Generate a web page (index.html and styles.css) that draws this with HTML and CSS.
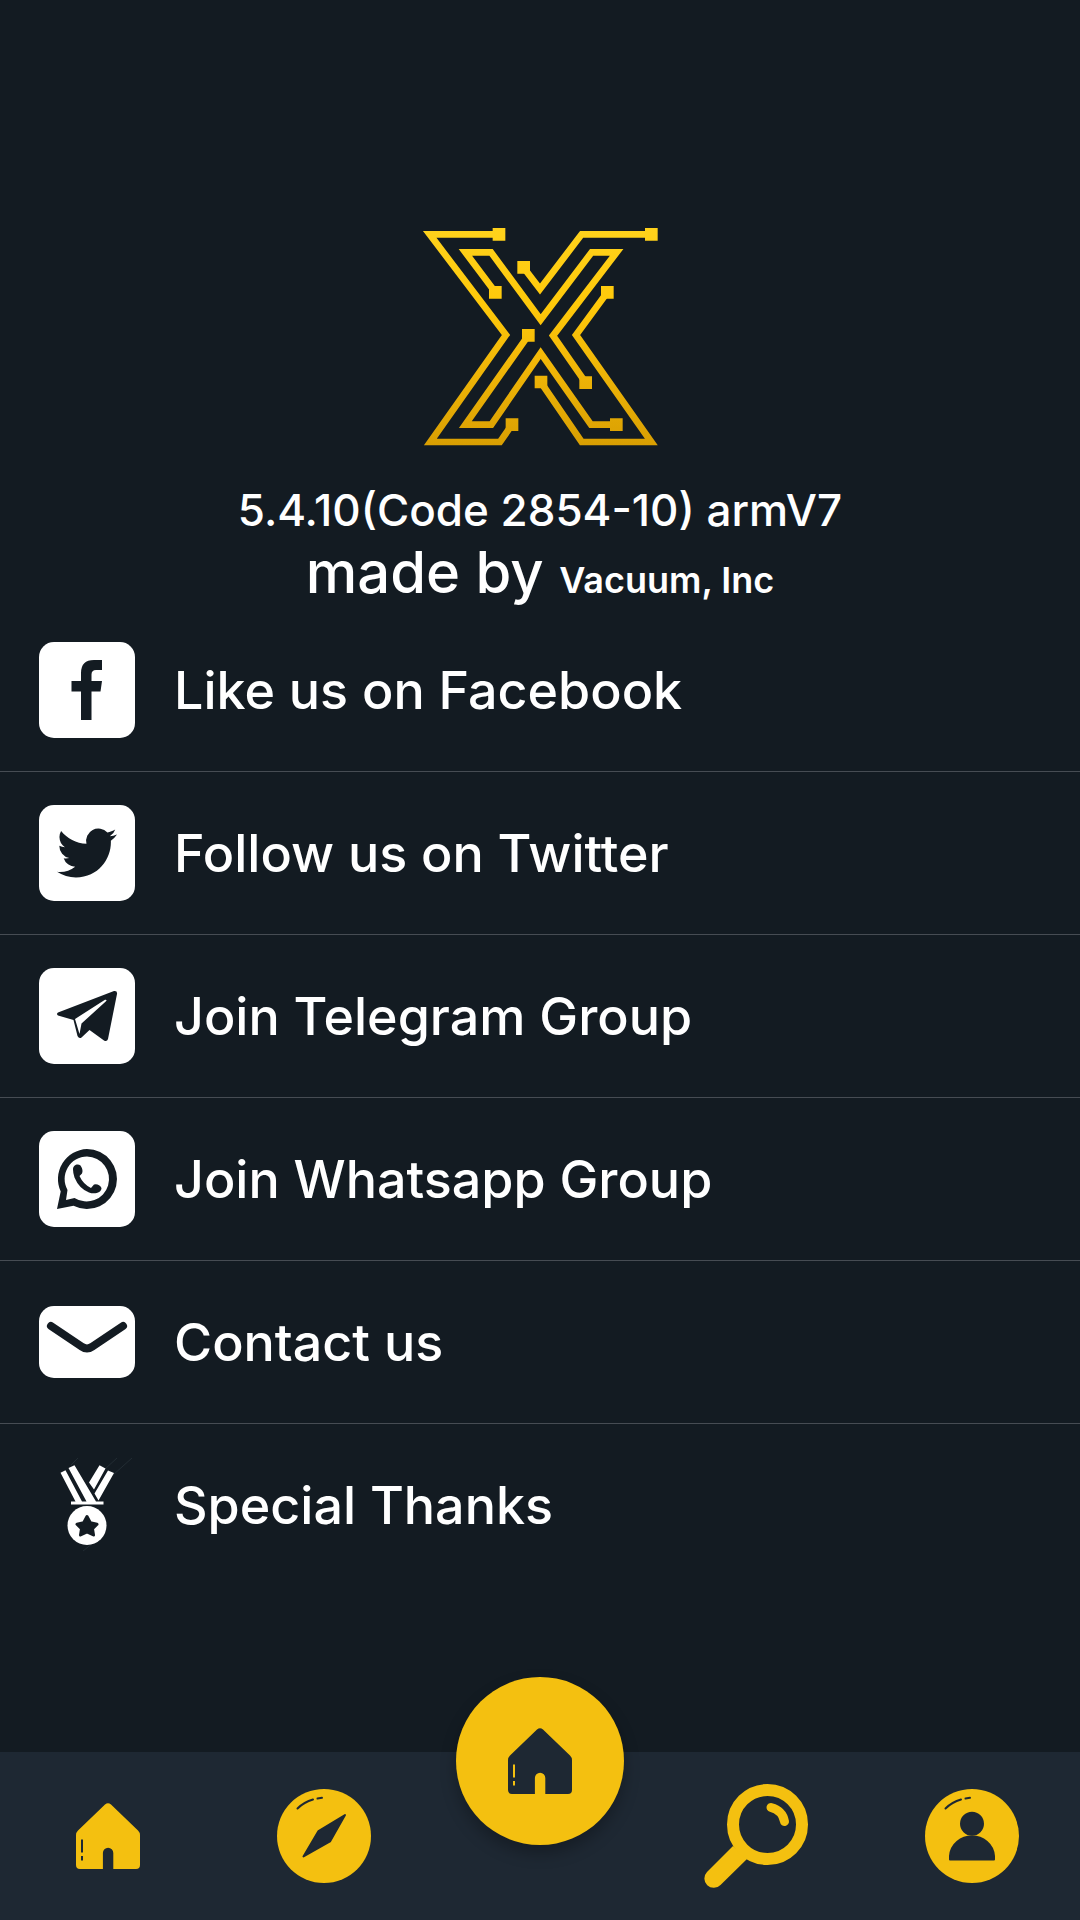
FILE: index.html
```
<!DOCTYPE html>
<html lang="en">
<head>
<meta charset="utf-8">
<meta name="viewport" content="width=device-width, initial-scale=1">
<title>About</title>
<link rel="stylesheet" href="styles.css">
</head>
<body>
<svg width="0" height="0" class="symbols" aria-hidden="true">
  <symbol id="house" viewBox="0 0 64 66">
    <path fill-rule="evenodd" d="M29 1.5Q32-1 35 1.5L62 27.500Q64 29.500 64 32V62Q64 66 60 66H37.300V50a5.200 5.200 0 0 0-10.400 0V66H4Q0 66 0 62V32Q0 29.500 2 27.500ZM5 36.500V49.500H7V36.500ZM5 53V57.500H7V53Z"/>
  </symbol>
</svg>
<main class="page">
  <header class="about">
    <svg class="logo" viewBox="0 0 780 720" role="img" aria-label="X">
      <defs>
        <linearGradient id="gold" gradientUnits="userSpaceOnUse" x1="0" y1="40" x2="0" y2="690">
          <stop offset="0" stop-color="#ffd21c"/>
          <stop offset=".35" stop-color="#ffc90a"/>
          <stop offset=".6" stop-color="#f3b908"/>
          <stop offset="1" stop-color="#d99f02"/>
        </linearGradient>
      </defs>
      <g fill="none" stroke="url(#gold)" stroke-width="20">
        <path d="M267 58H59L288 360 61 681H270L306 629"/>
        <path d="M256 232 166 112H243L392 314 545 112H620L429 362 527 503"/>
        <path d="M340 157 390 222 515 58H724"/>
        <path d="M592 232 498 360 724 681H515L392 501"/>
        <path d="M355 361 166 629H244L392 414 543 629H619"/>
      </g>
      <path fill="url(#gold)" d="M248 39h38v38h-38zM705 39h38v38h-38zM322 138h38v38h-38zM237 213h38v38h-38zM573 213h38v38h-38zM336 342h38v38h-38zM508 484h38v38h-38zM374 482h38v38h-38zM600 610h38v38h-38zM287 610h38v38h-38z"/>
    </svg>
    <h1 class="version">5.4.10(Code 2854-10) armV7</h1>
    <p class="maker">made by <strong>Vacuum, Inc</strong></p>
  </header>
  <ul class="links">
    <li><a href="#facebook">
      <svg class="icon" viewBox="0 0 96 96" aria-hidden="true"><rect class="light" width="96" height="96" rx="15"/><path class="dark" d="M63 18V28H57Q52.500 28 52.500 32.500V39H63L61.500 49.500H52.500V78H42V49.500H32.500V39H42V31Q42 18 55 18Z"/></svg>
      <span>Like us on Facebook</span></a></li>
    <li><a href="#twitter">
      <svg class="icon" viewBox="0 0 96 96" aria-hidden="true"><rect class="light" width="96" height="96" rx="15"/><path class="dark" transform="translate(18 18) scale(2.5)" d="M23.953 4.570a10 10 0 01-2.825.775 4.958 4.958 0 002.163-2.723c-.951.555-2.005.959-3.127 1.184a4.920 4.920 0 00-8.384 4.482C7.690 8.095 4.067 6.130 1.640 3.162a4.822 4.822 0 00-.666 2.475c0 1.710.870 3.213 2.188 4.096a4.904 4.904 0 01-2.228-.616v.060a4.923 4.923 0 003.946 4.827 4.996 4.996 0 01-2.212.085 4.936 4.936 0 004.604 3.417 9.867 9.867 0 01-6.102 2.105c-.390 0-.779-.023-1.170-.067a13.995 13.995 0 007.557 2.209c9.053 0 13.998-7.496 13.998-13.985 0-.210 0-.420-.015-.630A9.935 9.935 0 0024 4.590z"/></svg>
      <span>Follow us on Twitter</span></a></li>
    <li><a href="#telegram">
      <svg class="icon" viewBox="0 0 96 96" aria-hidden="true"><rect class="light" width="96" height="96" rx="15"/><path class="dark" d="M19 44.500 75 23Q78.500 22.500 78 26L69 71Q68 74 65 72.500L50.500 62 42.500 69.500Q40 71 38.500 68L34.500 52 19 47.500Q17 46 19 44.500Z"/><path class="light" d="M36 51 66 31.800Q68.500 31.500 67 33.300L42.500 55.500 40.500 66Z"/></svg>
      <span>Join Telegram Group</span></a></li>
    <li><a href="#whatsapp">
      <svg class="icon" viewBox="0 0 96 96" aria-hidden="true"><rect class="light" width="96" height="96" rx="15"/><path class="dark" fill-rule="evenodd" d="M48 18A30 30 0 1 1 34.500 74.800L18 78 21.700 60.500A30 30 0 0 1 48 18ZM48 25.500A22.500 22.500 0 0 0 28.500 59L27 69 35.500 67A22.500 22.500 0 1 0 48 25.500Z"/><path class="dark" d="M34 38.500C34 33.500 39 32.500 41.500 34.500Q44.500 39 43 42.500L40.500 45Q44 53 52 57L55 53.500Q60 52.500 62.500 57C62.500 62 55.500 63.500 50 61.500Q40 57.500 35.500 46.500 34 42 34 38.500Z"/></svg>
      <span>Join Whatsapp Group</span></a></li>
    <li><a href="#contact">
      <svg class="icon" viewBox="0 0 96 96" aria-hidden="true"><rect class="light" y="12" width="96" height="72" rx="15"/><path class="line" d="M12 32 42.500 52.500Q48 56.500 53.500 52.500L84 32"/></svg>
      <span>Contact us</span></a></li>
    <li><a href="#thanks">
      <svg class="icon" viewBox="0 0 96 96" aria-hidden="true"><path class="hair" d="M32 8 39 1M66 12 78 1M74 18 93 1M44 94 54 86"/><path class="light" d="M21.500 15.700 26.500 13.300 43 44.500H36.500ZM29.500 11 35.500 8.300 57 44.500H47.500ZM60.500 8.300 66.500 11.500 55 32.500 50 25.500ZM69 13.500 75 16 59.500 43.500 55.500 36.500ZM32 44.500H64.500V47.500H32Z"/><circle class="light" cx="48" cy="68.500" r="19.500"/><path class="star" d="M48 59.500 51.300 65.800 58 67.300 53.500 71.700 54.500 78 48 74.800 41.500 78 42.500 71.700 38 67.300 44.700 65.800Z"/></svg>
      <span>Special Thanks</span></a></li>
  </ul>
</main>
<nav class="tabs" aria-label="Main">
  <a href="#home" aria-label="Home"><svg width="64" height="66"><use href="#house"/></svg></a>
  <a href="#explore" aria-label="Explore"><svg width="94" height="94" viewBox="0 0 94 94"><circle cx="47" cy="47" r="47"/><path class="cut" d="M68 26 41.500 42 26.500 67.500 53 52.500Z"/><path class="shine" d="M20.500 19.500Q27 13 36 10.500M40.500 9.500 45 8.800"/></svg></a>
  <div class="slot"><button class="fab" type="button" aria-label="Home"><svg width="64" height="66"><use href="#house"/></svg></button></div>
  <a href="#search" aria-label="Search"><svg width="104" height="104" viewBox="0 0 104 104"><path d="M29 62 43 75 16.500 101A9.200 9.200 0 0 1 3 88Z"/><circle class="lens" cx="63.500" cy="40.500" r="34.500"/><path class="glint" d="M67 23.500Q78.500 26.500 80.500 37.500"/></svg></a>
  <a href="#profile" aria-label="Profile"><svg width="94" height="94" viewBox="0 0 94 94"><circle cx="47" cy="47" r="47"/><circle class="cut" cx="47" cy="34.700" r="11"/><path class="cut" d="M25 70.500V67C26 55 36 47.500 47 47.500S68 55 69 67V70.500Z"/><path class="shine" d="M20.500 19.500Q27 13 36 10.500M40.500 9.500 45 8.800"/></svg></a>
</nav>
</body>
</html>
```
FILE: styles.css
```
:root {
  --bg: #131b22;
  --bar: #1e2833;
  --accent: #f4c010;
}

* {
  box-sizing: border-box;
}

body {
  margin: 0;
  min-height: 100vh;
  display: flex;
  flex-direction: column;
  background: var(--bg);
  color: #fff;
  font-family: Inter, "Noto Sans", sans-serif;
  font-weight: 500;
}

.symbols {
  position: absolute;
}

.page {
  flex: 1;
}

.about {
  display: flex;
  flex-direction: column;
  align-items: center;
  padding: 215px 0 6px;
}

.logo {
  width: 260px;
  height: 240px;
  margin-bottom: 24px;
}

.version,
.maker {
  margin: 0;
  line-height: 62px;
  text-align: center;
  font-weight: 500;
}

.version {
  font-size: 44px;
}

.maker {
  font-size: 58px;
}

.maker strong {
  font-size: 36px;
  line-height: 1;
  font-weight: 600;
}

.links {
  list-style: none;
  margin: 0;
  padding: 0;
}

.links li + li {
  border-top: 1px solid #464c53;
}

.links a {
  display: flex;
  align-items: center;
  gap: 39px;
  height: 162px;
  padding: 0 39px;
  color: inherit;
  text-decoration: none;
  font-size: 52px;
}

.icon {
  flex: none;
  width: 96px;
  height: 96px;
}

.light {
  fill: #fff;
}

.dark {
  fill: var(--bg);
}

.star {
  fill: var(--bg);
  stroke: var(--bg);
  stroke-width: 3;
  stroke-linejoin: round;
}

.line {
  fill: none;
  stroke: var(--bg);
  stroke-width: 8;
  stroke-linecap: round;
}

.hair {
  fill: none;
  stroke: #222c33;
}

.tabs {
  position: sticky;
  bottom: 0;
  display: grid;
  grid-template-columns: repeat(5, 1fr);
  height: 168px;
  background: var(--bar);
  fill: var(--accent);
}

.tabs a {
  display: flex;
  align-items: center;
  justify-content: center;
}

.slot {
  position: relative;
}

.fab {
  position: absolute;
  top: -75px;
  left: calc(50% - 84px);
  display: flex;
  align-items: center;
  justify-content: center;
  width: 168px;
  height: 168px;
  padding: 0;
  border: 0;
  border-radius: 50%;
  background: var(--accent);
  fill: var(--bar);
  box-shadow: 0 8px 16px rgba(0, 0, 0, .28);
}

.cut {
  fill: var(--bar);
  stroke: var(--bar);
  stroke-width: 2;
  stroke-linejoin: round;
}

.shine {
  fill: none;
  stroke: var(--bar);
  stroke-width: 2;
  stroke-linecap: round;
}

.lens {
  fill: none;
  stroke: var(--accent);
  stroke-width: 12;
}

.glint {
  fill: none;
  stroke: var(--accent);
  stroke-width: 9;
  stroke-linecap: round;
}
```
